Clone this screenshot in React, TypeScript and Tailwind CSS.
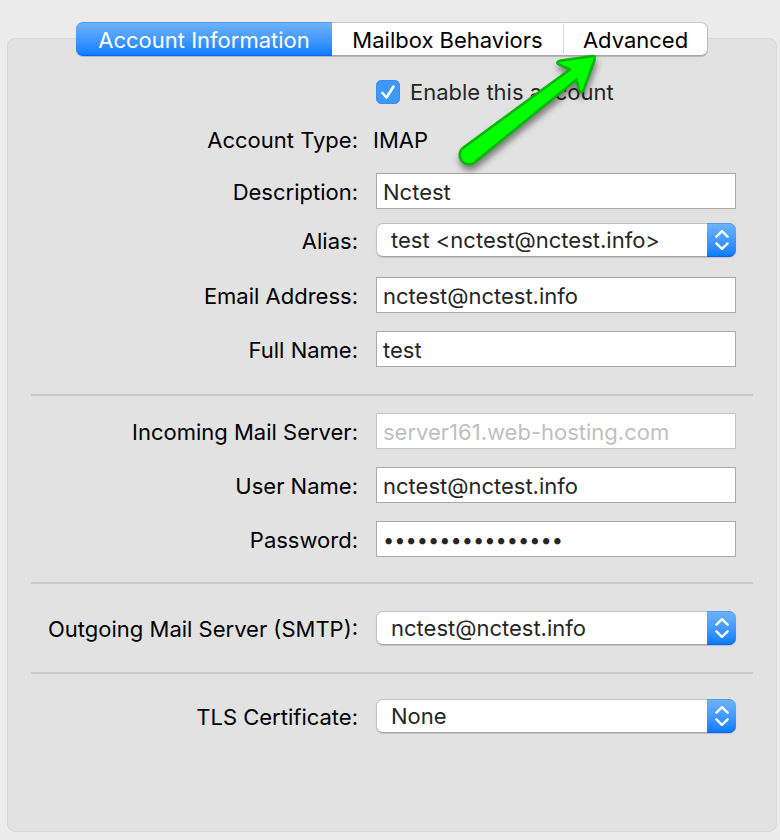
import { useState } from "react";
import type { ReactNode } from "react";

const fieldClass =
  "block h-9 w-full border border-[#a9a9a9] bg-white px-[6px] pt-0.5 leading-7 text-[#262626] outline-none disabled:border-[#c6c6c6] disabled:text-[#bfbfbf]";

function Row({ label, htmlFor, className = "", children }: { label: string; htmlFor?: string; className?: string; children: ReactNode }) {
  return (
    <div className={`grid grid-cols-[327fr_360fr] items-center gap-[18px] pr-[17px] ${className}`}>
      <label htmlFor={htmlFor} className="pt-0.5 text-right whitespace-nowrap">
        {label}
      </label>
      <div className="min-w-0">{children}</div>
    </div>
  );
}

function Select({ id, options }: { id: string; options: string[] }) {
  return (
    <div className="relative rounded-[7px] shadow-[0_1px_1px_rgba(0,0,0,0.15)]">
      <select
        id={id}
        className="block h-[34px] w-full appearance-none rounded-[7px] border border-[#c2c2c2] border-b-[#a6a6a6] bg-white pr-9 pl-[14px] text-[22px] leading-7 text-[#262626] outline-none"
      >
        {options.map((o) => (
          <option key={o}>{o}</option>
        ))}
      </select>
      {/* blue cap with the up/down arrows */}
      <span className="pointer-events-none absolute inset-y-0 right-0 flex w-[29px] items-center justify-center rounded-r-[7px] border-t border-b border-t-[#4f9df0] border-b-[#0a5fff] bg-linear-to-b from-[#6cb3fa] to-[#067dff]">
        <svg width="16" height="22" viewBox="0 0 16 22" fill="none" stroke="white" strokeWidth="2.4" strokeLinecap="round" strokeLinejoin="round">
          <path d="M2.4 7.600 8 2.200 13.600 7.600M2.400 14.400 8 19.800 13.600 14.400" />
        </svg>
      </span>
    </div>
  );
}

function Divider({ className = "" }: { className?: string }) {
  return <hr className={`border-t-2 border-[#c9c9c9] ${className}`} />;
}

const tabs = [
  { name: "Account Information", width: "w-64" },
  { name: "Mailbox Behaviors", width: "w-[231px]" },
  { name: "Advanced", width: "w-[145px]" },
];

export default function App() {
  const [active, setActive] = useState(0);
  const [enabled, setEnabled] = useState(true);

  return (
    <div className="min-h-screen bg-[#ebebeb] pt-[22px] pr-[3px] pb-2 pl-[7px] font-['Inter',sans-serif] text-[22px] leading-7 text-black">
      <div className="relative z-10 flex justify-center">
        <div className="relative">
          <div className="flex rounded-[7px] shadow-[0_1px_1px_rgba(0,0,0,0.2)]">
            {tabs.map((tab, i) => (
              <button
                key={tab.name}
                onClick={() => setActive(i)}
                className={`h-[34px] border-y pt-0.5 whitespace-nowrap first:rounded-l-[7px] last:rounded-r-[7px] last:border-x last:border-r-[#c0c0c0] last:border-l-[#dcdcdc] ${tab.width} ${
                  active === i
                    ? "border-t-[#4f9df0] border-b-[#0a5fff] bg-linear-to-b from-[#6cb3fa] to-[#067dff] text-white"
                    : "border-t-[#c8c8c8] border-b-[#a6a6a6] bg-white"
                }`}
              >
                {tab.name}
              </button>
            ))}
          </div>

          {/* arrow pointing at the Advanced tab */}
          <svg
            className="pointer-events-none absolute top-[28px] right-[102px] drop-shadow-[1px_5px_3px_rgba(0,0,0,0.45)]"
            width="156"
            height="126"
            viewBox="450 50 156 126"
          >
            <path
              d="M594.5 57.5Q595 56 593 56L561 60.5Q555 62 559 64.5L570 69.5L463.5 147.5A9.3 9.3 0 0 0 474.5 162.5L576.5 79.5L579 90Q581 94.5 583.5 90L594.5 60Z"
              fill="#00ff00"
              stroke="#06b50a"
              strokeWidth="2.6"
              strokeLinejoin="round"
            />
          </svg>
        </div>
      </div>

      <div className="-mt-[18px] rounded-[8px] border border-[#d8d8d8] bg-[#e2e2e2] px-[23px] pt-[39px] pb-[98px]">
        <div className="grid grid-cols-[327fr_360fr] gap-[18px] pr-[17px]">
          <label className="col-start-2 flex items-center gap-[10px] whitespace-nowrap text-[#262626]">
            <span className="relative block size-6 shrink-0">
              <input
                type="checkbox"
                checked={enabled}
                onChange={(e) => setEnabled(e.target.checked)}
                className="block size-6 appearance-none rounded-[5px] border border-[#b5b5b5] bg-white checked:border-[#3b8df5] checked:bg-[#3f99fb]"
              />
              {enabled && (
                <svg className="pointer-events-none absolute inset-0" width="24" height="24" viewBox="0 0 24 24" fill="none" stroke="white" strokeWidth="2.6" strokeLinecap="round" strokeLinejoin="round">
                  <path d="M6.5 13 10.5 17.5 17.500 6.500" />
                </svg>
              )}
            </span>
            Enable this account
          </label>
        </div>

        <Row label="Account Type:" className="mt-[18px]">
          <p className="-ml-[3px] pt-0.5">IMAP</p>
        </Row>
        <Row label="Description:" htmlFor="description" className="mt-[19px]">
          <input id="description" className={fieldClass} defaultValue="Nctest" />
        </Row>
        <Row label="Alias:" htmlFor="alias" className="mt-[14px]">
          <Select id="alias" options={["test <nctest@nctest.info>"]} />
        </Row>
        <Row label="Email Address:" htmlFor="email" className="mt-5">
          <input id="email" className={fieldClass} defaultValue="nctest@nctest.info" />
        </Row>
        <Row label="Full Name:" htmlFor="fullname" className="mt-[18px]">
          <input id="fullname" className={fieldClass} defaultValue="test" />
        </Row>

        <Divider className="mt-[27px] mb-[17px]" />

        <Row label="Incoming Mail Server:" htmlFor="incoming">
          <input id="incoming" className={fieldClass} defaultValue="server161.web-hosting.com" disabled />
        </Row>
        <Row label="User Name:" htmlFor="username" className="mt-[18px]">
          <input id="username" className={fieldClass} defaultValue="nctest@nctest.info" />
        </Row>
        <Row label="Password:" htmlFor="password" className="mt-[18px]">
          <input id="password" type="password" className={`${fieldClass} text-[20px]`} defaultValue="0123456789abcdef" />
        </Row>

        <Divider className="mt-[25px] mb-[27px]" />

        <Row label="Outgoing Mail Server (SMTP):" htmlFor="outgoing">
          <Select id="outgoing" options={["nctest@nctest.info"]} />
        </Row>

        <Divider className="mt-[27px] mb-[25px]" />

        <Row label="TLS Certificate:" htmlFor="tls">
          <Select id="tls" options={["None"]} />
        </Row>
      </div>
    </div>
  );
}
